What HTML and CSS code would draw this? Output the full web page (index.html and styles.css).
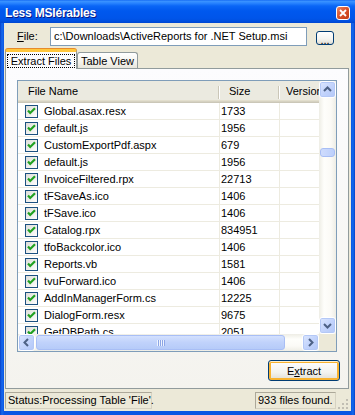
FILE: index.html
```html
<!DOCTYPE html>
<html lang="en">
<head>
    <meta charset="UTF-8">
    <title>Less MSIérables</title>
    <link rel="stylesheet" href="styles.css">
</head>
<body>
    <svg class="defs" width="0" height="0">
        <symbol id="chk" viewBox="0 0 13 13">
            <defs>
                <linearGradient id="chkbg" x1="0" y1="0" x2="1" y2="1">
                    <stop offset="0" stop-color="#dcdcd7"/>
                    <stop offset="1" stop-color="#ffffff"/>
                </linearGradient>
            </defs>
            <rect x="0.5" y="0.5" width="12" height="12" fill="url(#chkbg)" stroke="#1c5180"/>
            <polyline points="3,5.5 5.2,8 10,3.2" fill="none" stroke="#21a121" stroke-width="2.2"/>
        </symbol>
    </svg>

    <div class="window">
        <div class="titlebar">
            <span class="title">Less MSIérables</span>
            <span class="close">
                <svg width="12" height="12" viewBox="0 0 12 12"><path d="M3 3 L9 9 M9 3 L3 9" stroke="#fff" stroke-width="1.8"/></svg>
            </span>
        </div>

        <div class="client">
            <div class="file-row">
                <span class="file-label"><u>F</u>ile:</span>
                <div class="textbox">c:\Downloads\ActiveReports for .NET Setup.msi</div>
                <button class="btn btn-small">...</button>
            </div>

            <div class="tabs">
                <div class="tab tab-active"><span class="focus">Extract Files</span></div>
                <div class="tab">Table View</div>
            </div>

            <div class="panel">
                <div class="listview">
                    <div class="lv-body">
                        <div class="lv-head">
                            <div class="hc hc-name">File Name</div>
                            <div class="hc hc-size">Size</div>
                            <div class="hc hc-ver">Version</div>
                        </div>
                        <div class="lv-row"><div class="c-name"><svg class="cb"><use href="#chk"/></svg>Global.asax.resx</div><div class="c-size">1733</div><div class="c-ver"></div></div>
                        <div class="lv-row"><div class="c-name"><svg class="cb"><use href="#chk"/></svg>default.js</div><div class="c-size">1956</div><div class="c-ver"></div></div>
                        <div class="lv-row"><div class="c-name"><svg class="cb"><use href="#chk"/></svg>CustomExportPdf.aspx</div><div class="c-size">679</div><div class="c-ver"></div></div>
                        <div class="lv-row"><div class="c-name"><svg class="cb"><use href="#chk"/></svg>default.js</div><div class="c-size">1956</div><div class="c-ver"></div></div>
                        <div class="lv-row"><div class="c-name"><svg class="cb"><use href="#chk"/></svg>InvoiceFiltered.rpx</div><div class="c-size">22713</div><div class="c-ver"></div></div>
                        <div class="lv-row"><div class="c-name"><svg class="cb"><use href="#chk"/></svg>tFSaveAs.ico</div><div class="c-size">1406</div><div class="c-ver"></div></div>
                        <div class="lv-row"><div class="c-name"><svg class="cb"><use href="#chk"/></svg>tFSave.ico</div><div class="c-size">1406</div><div class="c-ver"></div></div>
                        <div class="lv-row"><div class="c-name"><svg class="cb"><use href="#chk"/></svg>Catalog.rpx</div><div class="c-size">834951</div><div class="c-ver"></div></div>
                        <div class="lv-row"><div class="c-name"><svg class="cb"><use href="#chk"/></svg>tfoBackcolor.ico</div><div class="c-size">1406</div><div class="c-ver"></div></div>
                        <div class="lv-row"><div class="c-name"><svg class="cb"><use href="#chk"/></svg>Reports.vb</div><div class="c-size">1581</div><div class="c-ver"></div></div>
                        <div class="lv-row"><div class="c-name"><svg class="cb"><use href="#chk"/></svg>tvuForward.ico</div><div class="c-size">1406</div><div class="c-ver"></div></div>
                        <div class="lv-row"><div class="c-name"><svg class="cb"><use href="#chk"/></svg>AddInManagerForm.cs</div><div class="c-size">12225</div><div class="c-ver"></div></div>
                        <div class="lv-row"><div class="c-name"><svg class="cb"><use href="#chk"/></svg>DialogForm.resx</div><div class="c-size">9675</div><div class="c-ver"></div></div>
                        <div class="lv-row"><div class="c-name"><svg class="cb"><use href="#chk"/></svg>GetDBPath.cs</div><div class="c-size">2051</div><div class="c-ver"></div></div>
                    </div>

                    <div class="vscroll">
                        <div class="sb"><svg width="15" height="15" viewBox="0 0 15 15"><polyline points="4,9 7.5,5.5 11,9" fill="none" stroke="#4d6185" stroke-width="2"/></svg></div>
                        <div class="vthumb"></div>
                        <div class="spacer"></div>
                        <div class="sb"><svg width="15" height="15" viewBox="0 0 15 15"><polyline points="4,6 7.5,9.5 11,6" fill="none" stroke="#4d6185" stroke-width="2"/></svg></div>
                    </div>

                    <div class="hscroll">
                        <div class="sb"><svg width="15" height="15" viewBox="0 0 15 15"><polyline points="9,4 5.5,7.5 9,11" fill="none" stroke="#4d6185" stroke-width="2"/></svg></div>
                        <div class="hthumb"><span class="grip-lines"></span></div>
                        <div class="spacer"></div>
                        <div class="sb"><svg width="15" height="15" viewBox="0 0 15 15"><polyline points="6,4 9.5,7.5 6,11" fill="none" stroke="#4d6185" stroke-width="2"/></svg></div>
                    </div>

                    <div class="corner"></div>
                </div>

                <button class="btn btn-default">E<u>x</u>tract</button>
            </div>

            <div class="statusbar">
                <div class="status-panel status-left">Status:Processing Table 'File'.</div>
                <div class="status-panel status-right">933 files found.</div>
                <svg class="sizegrip" width="12" height="12" viewBox="0 0 12 12">
                    <rect x="9" y="1" width="2" height="2" fill="#c1beb3"/>
                    <rect x="5" y="5" width="2" height="2" fill="#c1beb3"/>
                    <rect x="9" y="5" width="2" height="2" fill="#c1beb3"/>
                    <rect x="1" y="9" width="2" height="2" fill="#c1beb3"/>
                    <rect x="5" y="9" width="2" height="2" fill="#c1beb3"/>
                    <rect x="9" y="9" width="2" height="2" fill="#c1beb3"/>
                </svg>
            </div>
        </div>
    </div>
</body>
</html>
```

FILE: styles.css
```css
* {
    box-sizing: border-box;
}
body {
    margin: 0;
    font-family: "Liberation Sans", Arial, sans-serif;
    font-size: 11px;
    color: #000;
}
.defs {
    position: absolute;
}

/* window frame */
.window {
    width: 355px;
    height: 415px;
    display: flex;
    flex-direction: column;
    background: linear-gradient(to right, #0840c8 0, #166aee 2px, #0a55e3 4px, #0a55e3 351px, #166aee 353px, #0840c8 355px);
}
.titlebar {
    height: 23px;
    flex: none;
    display: flex;
    align-items: center;
    padding: 2px 5px 0 5px;
    background: linear-gradient(to bottom, #0a5ff0 0, #3d95ff 1px, #2a85ff 3px, #0a66f6 6px, #0058ee 11px, #0055ea 18px, #0050e0 21px, #0046d0 23px);
    color: #fff;
}
.title {
    font-weight: bold;
    font-size: 12px;
    letter-spacing: -0.2px;
    text-shadow: 1px 1px #0a1883;
}
.close {
    margin-left: auto;
    width: 14px;
    height: 14px;
    border: 1px solid #fff;
    border-radius: 3px;
    background: linear-gradient(135deg, #ea8463, #d9512a 50%, #c23a12);
    display: flex;
    align-items: center;
    justify-content: center;
}

.client {
    flex: 1;
    margin: 0 4px 4px;
    background: #ece9d8;
    display: flex;
    flex-direction: column;
}

/* file row */
.file-row {
    height: 26px;
    flex: none;
    display: flex;
    align-items: flex-start;
    padding: 4px 0 0 13px;
}
.file-label {
    width: 33px;
    line-height: 19px;
}
.textbox {
    width: 257px;
    height: 19px;
    border: 1px solid #7f9db9;
    background: #fff;
    padding-left: 3px;
    line-height: 17px;
    white-space: nowrap;
    overflow: hidden;
}
.btn {
    font-family: "Liberation Sans", Arial, sans-serif;
    font-size: 11px;
    color: #000;
    border: 1px solid #003c74;
    border-radius: 3px;
    background: linear-gradient(#ffffff, #f3f3ef 60%, #e4e2da 90%, #d6d0c5);
    padding: 0;
}
.btn-small {
    width: 18px;
    height: 14px;
    margin: 4px 0 0 9px;
    line-height: 14px;
    padding-top: 1px;
}
.btn-default {
    width: 72px;
    height: 21px;
    margin-top: 8px;
    box-shadow: inset 0 1px #fff0cf, inset 0 0 0 2px #f8b330;
}

/* tabs */
.tabs {
    height: 19px;
    flex: none;
    display: flex;
    align-items: flex-end;
    padding-left: 1px;
}
.tab {
    width: 61px;
    height: 16px;
    border: 1px solid #919b9c;
    border-bottom: 0;
    border-radius: 3px 3px 0 0;
    background: linear-gradient(#ffffff, #f4f3ee 60%, #e8e6dc);
    display: flex;
    align-items: center;
    justify-content: center;
    padding-top: 1px;
}
.tab-active {
    width: 72px;
    height: 20px;
    margin-bottom: -1px;
    position: relative;
    z-index: 1;
    background: #fcfcfe;
    border-top: 3px solid #ffc73c;
    box-shadow: 0 -1px #e68b2c;
    padding-top: 0;
}
.focus {
    border: 1px dotted #000;
    padding: 0 3px;
    line-height: 12px;
}

/* tab page */
.panel {
    height: 321px;
    flex: none;
    margin: 0 2px 0 1px;
    border: 1px solid #919b9c;
    background: linear-gradient(#fcfcfe, #f4f3ee);
    padding: 11px 8px 7px 11px;
    display: flex;
    flex-direction: column;
    align-items: flex-end;
}

/* list view */
.listview {
    align-self: flex-start;
    width: 320px;
    height: 272px;
    border: 1px solid #7f9db9;
    background: #fff;
    display: grid;
    grid-template-columns: 1fr 17px;
    grid-template-rows: 1fr 17px;
}
.lv-body {
    overflow: hidden;
}
.lv-head {
    display: flex;
    height: 22px;
    background: #ebeae0;
    box-shadow: inset 0 -1px #cbc7b8, inset 0 -2px #d6d2c2, inset 0 -3px #e2decd;
}
.hc {
    flex: none;
    line-height: 20px;
    white-space: nowrap;
    padding-left: 9px;
    background:
        linear-gradient(#cbc7b8, #cbc7b8) no-repeat calc(100% - 1px) 5px / 1px 13px,
        linear-gradient(#fff, #fff) no-repeat 100% 5px / 1px 13px;
}
.hc-name {
    width: 202px;
    padding-left: 10px;
}
.hc-size {
    width: 60px;
}
.hc-ver {
    width: 100px;
    padding-left: 6px;
}
.lv-row {
    display: flex;
    height: 17px;
    border-bottom: 1px solid #edebe0;
}
.c-name {
    flex: none;
    width: 202px;
    border-right: 1px solid #edebe0;
    display: flex;
    align-items: center;
    gap: 6px;
    padding-left: 7px;
    white-space: nowrap;
}
.cb {
    width: 13px;
    height: 13px;
    flex: none;
}
.c-size {
    flex: none;
    width: 60px;
    border-right: 1px solid #edebe0;
    padding-left: 1px;
    line-height: 16px;
}
.c-ver {
    flex: none;
    width: 100px;
}

/* scroll bars */
.vscroll {
    display: flex;
    flex-direction: column;
    background: linear-gradient(to right, #eeede5, #fefefb 30%, #fbfaf6 70%, #eeede5);
}
.hscroll {
    display: flex;
    background: linear-gradient(#eeede5, #fefefb 30%, #fbfaf6 70%, #eeede5);
}
.corner {
    background: #ece9d8;
}
.spacer {
    flex: 1;
}
.sb {
    width: 17px;
    height: 17px;
    flex: none;
    border: 1px solid #fff;
    border-radius: 3px;
    background: linear-gradient(135deg, #dde7fe, #c3d4fc 50%, #b2c7f8);
    box-shadow: inset 0 0 0 1px #b4c8f6;
    display: flex;
    align-items: center;
    justify-content: center;
}
.vthumb {
    height: 9px;
    margin: 50px 1px 0;
    border-radius: 3px;
    background: linear-gradient(to right, #cfdcfd, #bccffb);
    border: 1px solid #a8bef5;
}
.hthumb {
    width: 249px;
    margin: 1px 0 1px 1px;
    border-radius: 3px;
    background: linear-gradient(#d3e0fe, #c0d2fb 50%, #b6cbf8);
    border: 1px solid #a8bef5;
    display: flex;
    align-items: center;
    justify-content: center;
}
.grip-lines {
    width: 8px;
    height: 6px;
    background: repeating-linear-gradient(to right, #eef3fe 0, #eef3fe 1px, #8ca6e6 1px, #8ca6e6 2px);
}

/* status bar */
.statusbar {
    flex: 1;
    display: flex;
    align-items: flex-start;
    padding: 3px 0 0 1px;
}
.status-panel {
    height: 17px;
    border: 1px solid #aca899;
    border-right-color: #d6d2c2;
    border-bottom-color: #d6d2c2;
    line-height: 15px;
    padding-left: 2px;
    white-space: nowrap;
}
.status-left {
    width: 147px;
}
.status-right {
    width: 81px;
    margin-left: auto;
}
.sizegrip {
    align-self: flex-end;
    margin: 0 2px 1px 1px;
}
```
